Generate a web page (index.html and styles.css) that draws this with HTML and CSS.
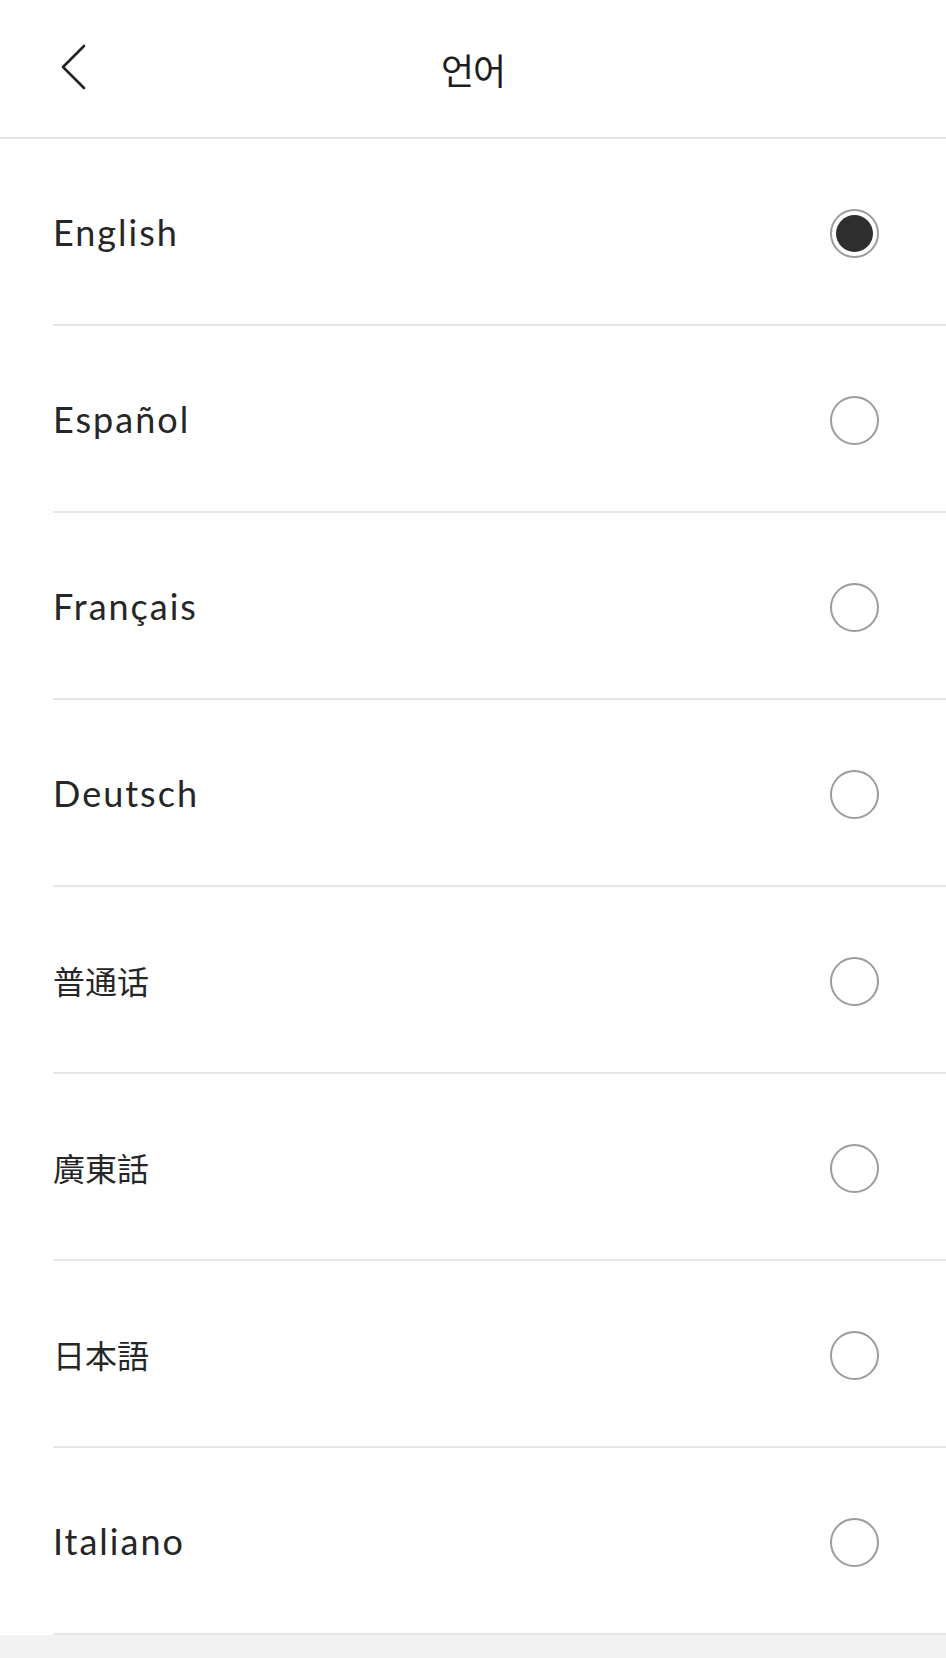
FILE: index.html
```html
<!DOCTYPE html>
<html lang="ko">
<head>
<meta charset="utf-8">
<title>언어</title>
<link rel="stylesheet" href="styles.css">
</head>
<body>
<div class="screen">
  <header class="topbar">
    <button class="back" aria-label="뒤로">
      <svg width="30" height="50" viewBox="0 0 30 50"><polyline points="24,4 3,25 24,46" fill="none" stroke="#222" stroke-width="2.6" stroke-linecap="round" stroke-linejoin="round"/></svg>
    </button>
    <h1 class="title">언어</h1>
  </header>
  <ul class="list">
    <li class="row"><span class="label">English</span><span class="radio checked"></span></li>
    <li class="row"><span class="label">Español</span><span class="radio"></span></li>
    <li class="row"><span class="label">Français</span><span class="radio"></span></li>
    <li class="row"><span class="label">Deutsch</span><span class="radio"></span></li>
    <li class="row"><span class="label cjk sc" lang="zh-CN">普通话</span><span class="radio"></span></li>
    <li class="row"><span class="label cjk tc" lang="zh-TW">廣東話</span><span class="radio"></span></li>
    <li class="row"><span class="label cjk jp" lang="ja">日本語</span><span class="radio"></span></li>
    <li class="row"><span class="label">Italiano</span><span class="radio"></span></li>
  </ul>
</div>
</body>
</html>
```

FILE: styles.css
```css
html, body {
  margin: 0;
  padding: 0;
  background: #f2f2f2;
}
body {
  font-family: "Lato", "Noto Sans", sans-serif;
  color: #262626;
}
.screen {
  background: #ffffff;
}
.topbar {
  height: 137px;
  border-bottom: 2px solid #e4e4e4;
  display: flex;
  align-items: center;
  justify-content: center;
  position: relative;
}
.back {
  position: absolute;
  left: 60px;
  top: 42px;
  border: 0;
  background: none;
  padding: 0;
  width: 30px;
  height: 50px;
  display: flex;
}
.title {
  margin: 0;
  font-family: "Noto Sans CJK KR", sans-serif;
  font-weight: 400;
  font-size: 36px;
  color: #1e1e1e;
  letter-spacing: -1px;
}
.list {
  list-style: none;
  margin: 0;
  padding: 0;
}
.row {
  margin-left: 53px;
  height: 185px;
  border-bottom: 2px solid #e6e6e6;
  display: flex;
  align-items: center;
  justify-content: space-between;
  padding-right: 67px;
}
.label {
  font-size: 36px;
  letter-spacing: 2px;
  color: #262626;
}
.cjk {
  font-size: 32px;
  letter-spacing: 0;
}
.sc { font-family: "Noto Sans CJK SC", sans-serif; }
.tc { font-family: "Noto Sans CJK TC", sans-serif; }
.jp { font-family: "Noto Sans CJK JP", sans-serif; }
.radio {
  width: 49px;
  height: 49px;
  margin-top: 4px;
  box-sizing: border-box;
  border: 2.5px solid #9c9c9c;
  border-radius: 50%;
  display: flex;
  align-items: center;
  justify-content: center;
}
.radio.checked::after {
  content: "";
  width: 37px;
  height: 37px;
  border-radius: 50%;
  background: #2e2e2e;
}
```
